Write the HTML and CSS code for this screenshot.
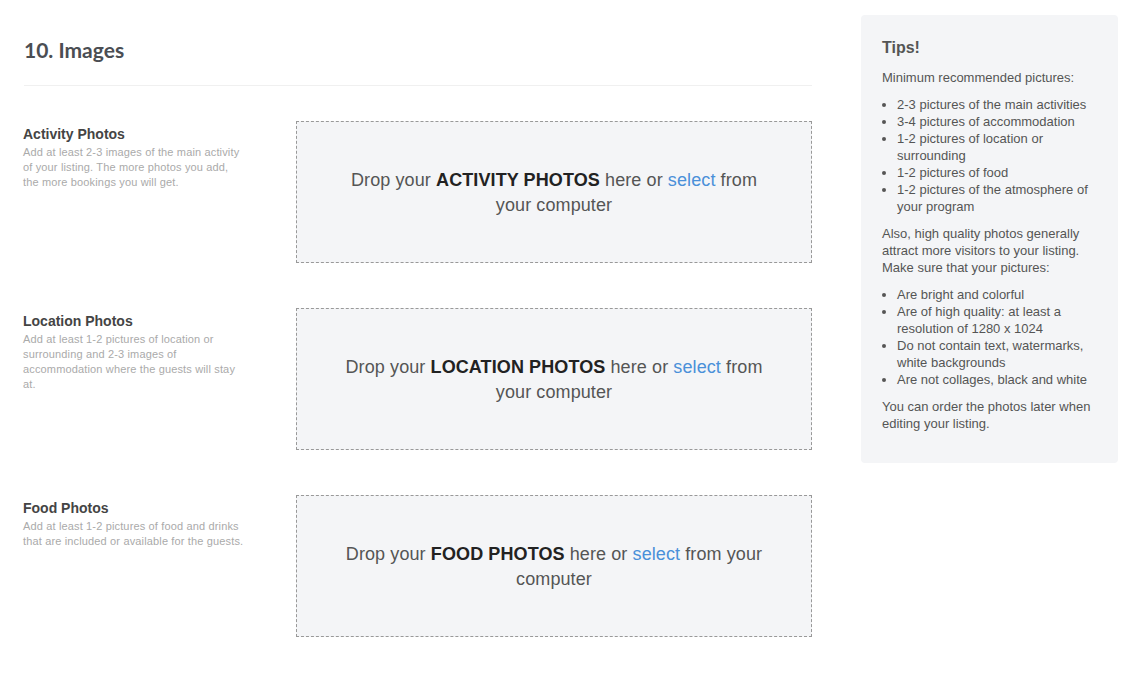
FILE: index.html
```html
<!DOCTYPE html>
<html lang="en">
<head>
<meta charset="utf-8">
<title>10. Images</title>
<link rel="stylesheet" href="styles.css">
</head>
<body>
<div class="page">
  <main class="main">
    <header class="section-head">
      <h1 class="section-title">10. Images</h1>
    </header>
    <div class="rows">
      <section class="row">
        <div class="info">
          <h2 class="info-title">Activity Photos</h2>
          <p class="info-desc">Add at least 2-3 images of the main activity of your listing. The more photos you add, the more bookings you will get.</p>
        </div>
        <div class="drop">
          <p class="drop-text">Drop your <strong>ACTIVITY PHOTOS</strong> here or <a class="drop-link" href="#">select</a> from your computer</p>
        </div>
      </section>
      <section class="row">
        <div class="info">
          <h2 class="info-title">Location Photos</h2>
          <p class="info-desc">Add at least 1-2 pictures of location or surrounding and 2-3 images of accommodation where the guests will stay at.</p>
        </div>
        <div class="drop">
          <p class="drop-text">Drop your <strong>LOCATION PHOTOS</strong> here or <a class="drop-link" href="#">select</a> from your computer</p>
        </div>
      </section>
      <section class="row">
        <div class="info">
          <h2 class="info-title">Food Photos</h2>
          <p class="info-desc">Add at least 1-2 pictures of food and drinks that are included or available for the guests.</p>
        </div>
        <div class="drop">
          <p class="drop-text">Drop your <strong>FOOD PHOTOS</strong> here or <a class="drop-link" href="#">select</a> from your computer</p>
        </div>
      </section>
    </div>
  </main>
  <aside class="tips">
    <h3 class="tips-title">Tips!</h3>
    <p class="tips-p">Minimum recommended pictures:</p>
    <ul class="tips-list">
      <li>2-3 pictures of the main activities</li>
      <li>3-4 pictures of accommodation</li>
      <li>1-2 pictures of location or surrounding</li>
      <li>1-2 pictures of food</li>
      <li>1-2 pictures of the atmosphere of your program</li>
    </ul>
    <p class="tips-p">Also, high quality photos generally attract more visitors to your listing. Make sure that your pictures:</p>
    <ul class="tips-list">
      <li>Are bright and colorful</li>
      <li>Are of high quality: at least a resolution of 1280 x 1024</li>
      <li>Do not contain text, watermarks, white backgrounds</li>
      <li>Are not collages, black and white</li>
    </ul>
    <p class="tips-p">You can order the photos later when editing your listing.</p>
  </aside>
</div>
</body>
</html>
```

FILE: styles.css
```css
* { box-sizing: border-box; }

html, body {
  margin: 0;
  padding: 0;
  background: #ffffff;
}

body {
  font-family: "Liberation Sans", Arial, sans-serif;
  color: #555;
}

.page {
  display: flex;
  align-items: flex-start;
  gap: 49px;
  padding: 15px 19px 0 24px;
}

.main {
  flex: none;
  width: 788px;
}

.section-head {
  margin-top: 23px;
  padding-bottom: 23px;
  border-bottom: 1px solid #f0f0f0;
}

.section-title {
  margin: 0;
  font-family: Lato, "Liberation Sans", sans-serif;
  font-weight: 700;
  font-size: 21px;
  line-height: 24px;
  color: #4b4e53;
}

.rows {
  display: flex;
  flex-direction: column;
  gap: 45px;
  padding-top: 35px;
}

.row {
  display: flex;
  align-items: flex-start;
  gap: 51px;
}

.info {
  flex: none;
  width: 222px;
  margin-left: -1px;
  padding-top: 5px;
}

.info-title {
  margin: 0;
  font-size: 14px;
  line-height: 16px;
  font-weight: 700;
  color: #444;
}

.info-desc {
  margin: 3px 0 0;
  font-size: 11px;
  line-height: 15px;
  letter-spacing: 0.15px;
  color: #aaa;
}

.drop {
  flex: none;
  width: 516px;
  height: 142px;
  display: flex;
  align-items: center;
  justify-content: center;
  padding: 1px 40px 0;
  background: #f4f5f7;
  border: 1px dashed #999;
}

.drop-text {
  margin: 0;
  text-align: center;
  font-size: 18px;
  line-height: 25px;
  letter-spacing: 0.1px;
  color: #555;
}

.drop-text strong {
  color: #222;
  font-weight: 700;
}

.drop-link {
  color: #4a90d9;
  text-decoration: none;
}

.tips {
  flex: none;
  width: 257px;
  background: #f4f5f7;
  border-radius: 4px;
  padding: 23px 21px 21px;
  font-size: 13px;
  line-height: 17px;
  color: #555;
}

.tips-title {
  margin: 0 0 11px;
  font-size: 16px;
  line-height: 20px;
  font-weight: 700;
  color: #555;
}

.tips-p {
  margin: 0 0 10px;
}

.tips-list {
  margin: 0 0 10px;
  padding-left: 15px;
}
```
